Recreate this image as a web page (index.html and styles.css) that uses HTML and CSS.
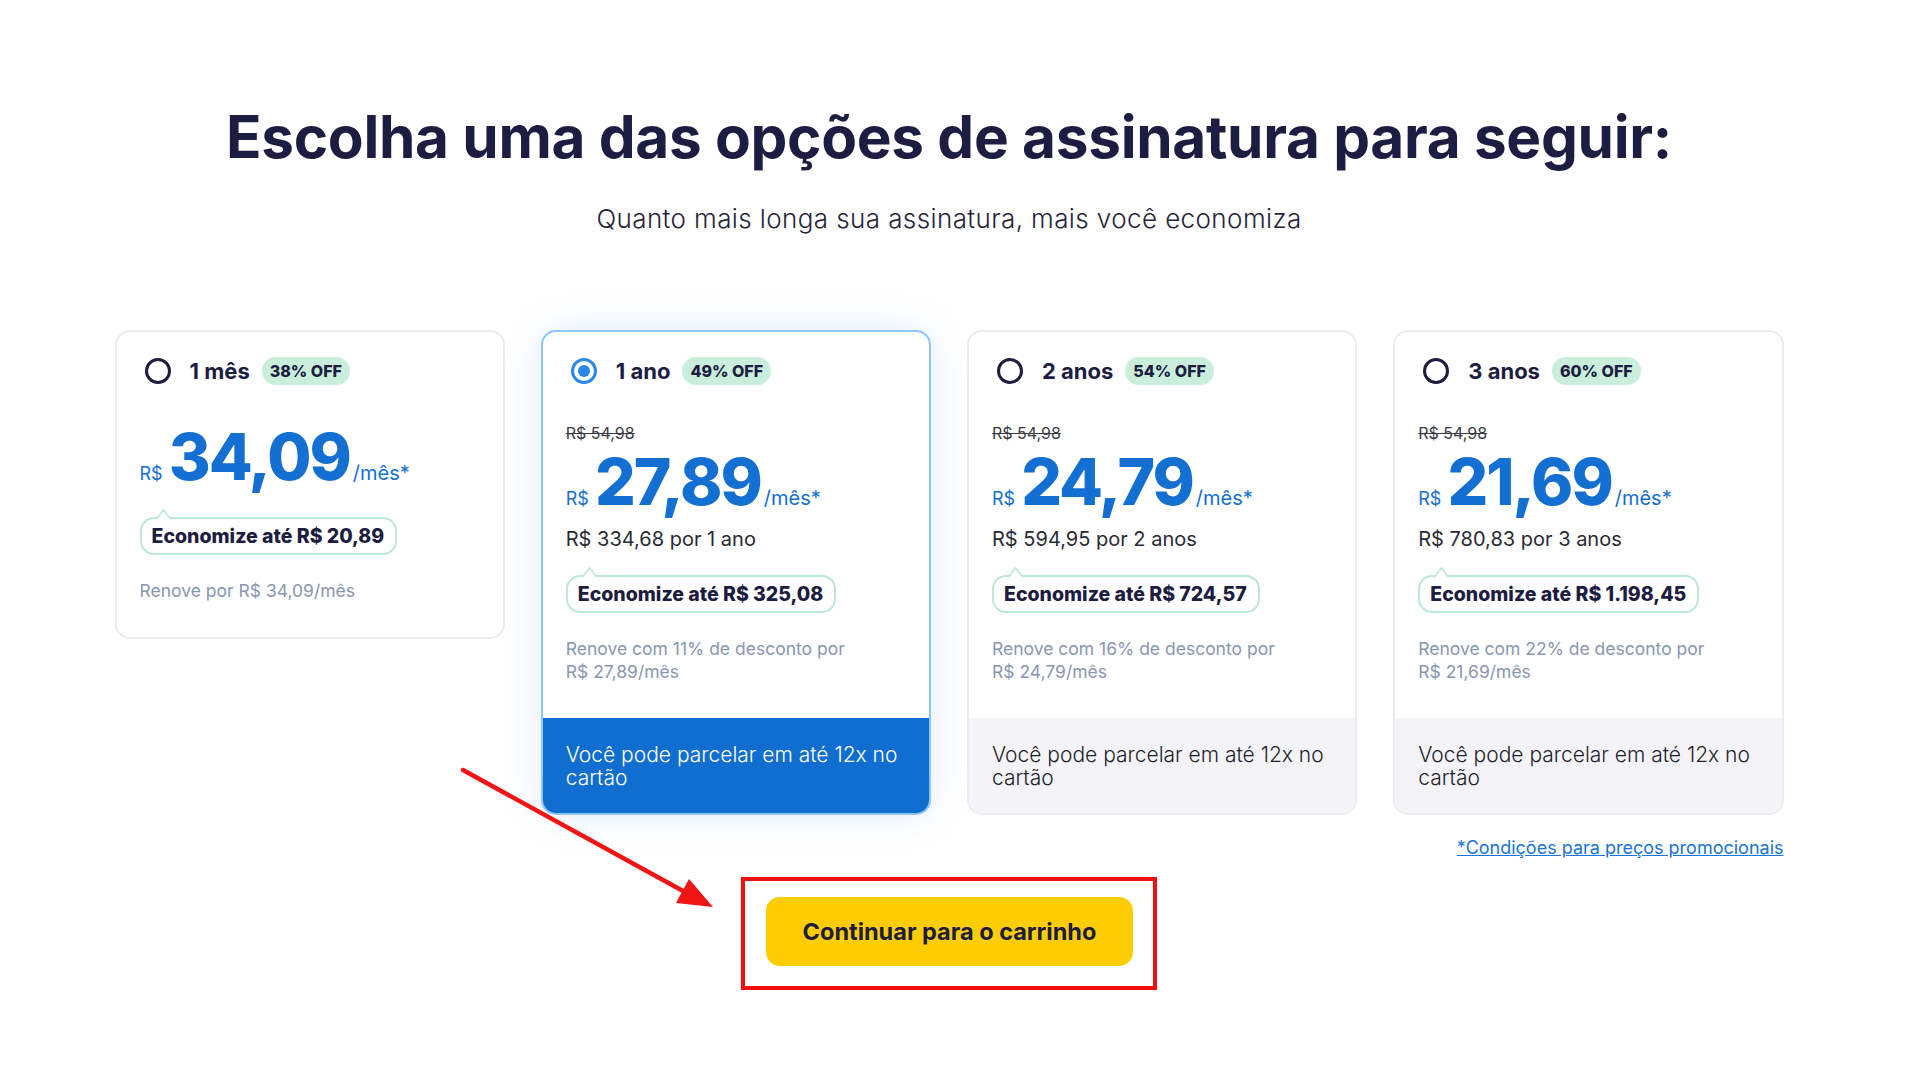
FILE: index.html
```html
<!DOCTYPE html>
<html lang="pt-BR">
<head>
<meta charset="utf-8">
<title>Escolha sua assinatura</title>
<link rel="stylesheet" href="styles.css">
</head>
<body>
<main class="page">
  <h1 class="title">Escolha uma das opções de assinatura para seguir:</h1>
  <p class="subtitle">Quanto mais longa sua assinatura, mais você economiza</p>

  <section class="plans">
    <article class="plan">
      <div class="plan__body">
        <div class="plan__head">
          <span class="radio"></span>
          <span class="plan__name">1 mês</span>
          <span class="badge">38% OFF</span>
        </div>
        <div class="price price--first">
          <span class="price__cur">R$</span><span class="price__num">34,09</span><span class="price__per">/mês*</span>
        </div>
        <div class="bubble">Economize até R$ 20,89</div>
        <p class="renew">Renove por R$ 34,09/mês</p>
      </div>
    </article>

    <article class="plan plan--active">
      <div class="plan__body">
        <div class="plan__head">
          <span class="radio radio--on"></span>
          <span class="plan__name">1 ano</span>
          <span class="badge">49% OFF</span>
        </div>
        <div class="old">R$ 54,98</div>
        <div class="price">
          <span class="price__cur">R$</span><span class="price__num">27,89</span><span class="price__per">/mês*</span>
        </div>
        <div class="total">R$ 334,68 por 1 ano</div>
        <div class="bubble">Economize até R$ 325,08</div>
        <p class="renew">Renove com 11% de desconto por R$&nbsp;27,89/mês</p>
      </div>
      <div class="plan__foot">Você pode parcelar em até 12x no cartão</div>
    </article>

    <article class="plan">
      <div class="plan__body">
        <div class="plan__head">
          <span class="radio"></span>
          <span class="plan__name">2 anos</span>
          <span class="badge">54% OFF</span>
        </div>
        <div class="old">R$ 54,98</div>
        <div class="price">
          <span class="price__cur">R$</span><span class="price__num">24,79</span><span class="price__per">/mês*</span>
        </div>
        <div class="total">R$ 594,95 por 2 anos</div>
        <div class="bubble">Economize até R$ 724,57</div>
        <p class="renew">Renove com 16% de desconto por R$&nbsp;24,79/mês</p>
      </div>
      <div class="plan__foot">Você pode parcelar em até 12x no cartão</div>
    </article>

    <article class="plan">
      <div class="plan__body">
        <div class="plan__head">
          <span class="radio"></span>
          <span class="plan__name">3 anos</span>
          <span class="badge">60% OFF</span>
        </div>
        <div class="old">R$ 54,98</div>
        <div class="price">
          <span class="price__cur">R$</span><span class="price__num">21,69</span><span class="price__per">/mês*</span>
        </div>
        <div class="total">R$ 780,83 por 3 anos</div>
        <div class="bubble">Economize até R$ 1.198,45</div>
        <p class="renew">Renove com 22% de desconto por R$&nbsp;21,69/mês</p>
      </div>
      <div class="plan__foot">Você pode parcelar em até 12x no cartão</div>
    </article>
  </section>

  <div class="terms"><a href="#">*Condições para preços promocionais</a></div>

  <div class="cta-frame">
    <button class="cta" type="button">Continuar para o carrinho</button>
  </div>

  <svg class="arrow" width="270" height="160" viewBox="0 0 270 160" aria-hidden="true">
    <line x1="8" y1="8" x2="228" y2="129" stroke="#f01414" stroke-width="4.5" stroke-linecap="round"/>
    <polygon points="258,145 221,141 234,117" fill="#f01414"/>
  </svg>
</main>
</body>
</html>
```

FILE: styles.css
```css
* {
  box-sizing: border-box;
}

html,
body {
  margin: 0;
  background: #ffffff;
}

body {
  font-family: Inter, Lato, "Noto Sans", sans-serif;
  color: #1d1c41;
}

.page {
  position: relative;
  width: 1898px;
  min-height: 1080px;
  padding-top: 102px;
}

.title {
  margin: 0;
  text-align: center;
  font-size: 58.5px;
  line-height: 1.2;
  font-weight: 700;
  letter-spacing: -0.3px;
  color: #1d1c41;
}

.subtitle {
  margin: 31px 0 0;
  text-align: center;
  font-size: 26px;
  line-height: 1.2;
  font-weight: 300;
  letter-spacing: 0.4px;
  color: #25243a;
}

.plans {
  width: 1669px;
  margin: 96px auto 0;
  display: grid;
  grid-template-columns: repeat(4, 1fr);
  gap: 36px;
  align-items: start;
}

.plan {
  display: flex;
  flex-direction: column;
  background: #ffffff;
  border: 2px solid #ececf0;
  border-radius: 15px;
  overflow: hidden;
}

.plan--active {
  border-color: #8ec5f7;
  box-shadow: 0 0 42px rgba(20, 111, 210, 0.12);
}

.plan__body {
  display: flex;
  flex-direction: column;
  align-items: flex-start;
  padding: 25px 23px 35px;
}

.plan__head {
  display: flex;
  align-items: center;
  height: 28px;
}

.radio {
  flex: none;
  width: 26px;
  height: 26px;
  margin: 0 19px 0 5px;
  border: 3px solid #1d1c41;
  border-radius: 50%;
  display: grid;
  place-items: center;
}

.radio--on {
  border-color: #2c87e8;
}

.radio--on::after {
  content: "";
  width: 12px;
  height: 12px;
  border-radius: 50%;
  background: #2c87e8;
}

.plan__name {
  font-size: 22px;
  font-weight: 700;
  margin-right: 12px;
}

.badge {
  display: inline-flex;
  align-items: center;
  height: 28px;
  padding: 0 8px;
  border-radius: 14px;
  background: #c9eedc;
  font-size: 16px;
  font-weight: 800;
  color: #1d1c41;
}

.old {
  margin-top: 38px;
  font-size: 16px;
  line-height: 20px;
  color: #3a3a44;
  text-decoration: line-through;
}

.price {
  margin-top: 7px;
  line-height: 64px;
  font-size: 64px;
  color: #146fd2;
  white-space: nowrap;
}

.price--first {
  margin-top: 40px;
  margin-bottom: 4px;
}

.price__cur {
  font-size: 18px;
  line-height: 1;
}

.price__num {
  font-weight: 800;
  letter-spacing: -2px;
  margin: 0 3px 0 6px;
}

.price__per {
  font-size: 20px;
  line-height: 1;
}

.total {
  margin-top: 13px;
  font-size: 20px;
  line-height: 24px;
  color: #2a2a35;
}

.bubble {
  position: relative;
  margin-top: 24px;
  padding: 6px 11px 6px 10px;
  border: 2px solid #bde9d4;
  border-radius: 14px;
  background: #ffffff;
  font-size: 19.5px;
  line-height: 22px;
  font-weight: 800;
  color: #1d1c41;
}

.bubble::before {
  content: "";
  position: absolute;
  top: -7px;
  left: 15px;
  width: 11px;
  height: 11px;
  background: #ffffff;
  border-top: 2px solid #bde9d4;
  border-left: 2px solid #bde9d4;
  border-top-left-radius: 3px;
  transform: rotate(45deg) skew(8deg, 8deg);
}

.renew {
  margin: 24px 0 0;
  font-size: 17.5px;
  line-height: 23px;
  color: #8996b2;
}

.plan__foot {
  padding: 25px 23px 24px;
  background: #f4f4f8;
  font-size: 21px;
  line-height: 23px;
  font-weight: 300;
  color: #1f1f2b;
}

.plan--active .plan__foot {
  background: #0f6ecf;
  color: #ffffff;
}

.terms {
  width: 1669px;
  margin: 21px auto 0;
  text-align: right;
  font-size: 18px;
  line-height: 23px;
}

.terms a {
  color: #1a73d6;
  text-decoration: underline;
}

.cta-frame {
  width: fit-content;
  margin: 18px auto 0;
  padding: 16px 20px 20px 21px;
  border: 4px solid #f10f0f;
}

.cta {
  display: block;
  width: 367px;
  height: 69px;
  border: 0;
  border-radius: 14px;
  background: #fdcd03;
  font-family: Inter, Lato, "Noto Sans", sans-serif;
  font-size: 23.5px;
  font-weight: 700;
  color: #1d1c41;
}

.arrow {
  position: absolute;
  left: 455px;
  top: 762px;
  pointer-events: none;
}
```
